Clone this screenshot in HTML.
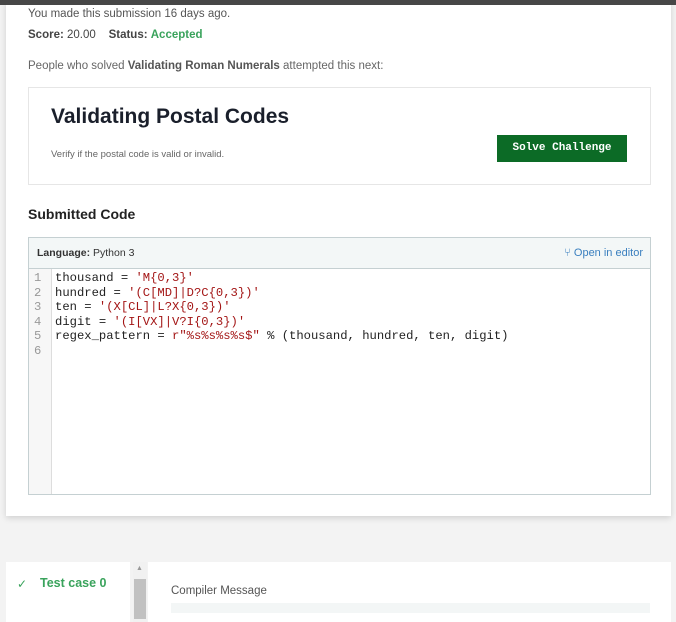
<!DOCTYPE html>
<html><head><style>
body{margin:0;width:676px;height:611px;background:#f3f3f3;font-family:"Liberation Sans",sans-serif;position:relative;overflow:hidden;}
.top{position:absolute;left:0;top:0;width:676px;height:5px;background:#474747;z-index:5;}
.card{position:absolute;left:6px;top:0;width:665px;height:516px;background:#fff;box-shadow:0 2px 6px rgba(0,0,0,.15);}
.t{position:absolute;white-space:nowrap;}
.box{position:absolute;left:28px;top:87px;width:621px;height:96px;border:1px solid #e6e6e6;}
.btn{position:absolute;left:497px;top:135px;width:130px;height:27px;background:#0c6b26;color:#fff;font:bold 11px "Liberation Mono",monospace;text-align:center;line-height:27px;}
.code{position:absolute;left:28px;top:237px;width:621px;height:256px;border:1px solid #c5d0d2;overflow:hidden;}
.hdr{height:30px;background:#f3f7f7;border-bottom:1px solid #c5d0d2;}
.gut{position:absolute;left:0;top:31px;width:22px;height:225px;background:#f7f7f7;border-right:1px solid #ddd;}
pre{margin:0;font:12.2px/14.5px "Liberation Mono",monospace;position:absolute;white-space:pre;}
.s{color:#a31515;}
</style></head><body>
<div class="top"></div>
<div class="card">
<div class="t" style="left:22px;top:8px;font-size:11.5px;color:#555">You made this submission 16 days ago.</div>
<div class="t" style="left:22px;top:29px;font-size:11.5px;color:#444"><b>Score:</b> 20.00 &nbsp;&nbsp;&nbsp;<b>Status:</b> <b style="color:#3aa35c">Accepted</b></div>
<div class="t" style="left:22px;top:60px;font-size:11.5px;color:#666">People who solved <b style="color:#555">Validating Roman Numerals</b> attempted this next:</div>
</div>
<div class="box"></div>
<div class="t" style="left:51px;top:105px;font-size:21px;font-weight:bold;color:#1a1f2b">Validating Postal Codes</div>
<div class="t" style="left:51px;top:149px;font-size:9.5px;color:#666">Verify if the postal code is valid or invalid.</div>
<div class="btn">Solve Challenge</div>
<div class="t" style="left:28px;top:206px;font-size:14px;font-weight:bold;color:#222">Submitted Code</div>
<div class="code">
<div class="hdr"><span class="t" style="left:8px;top:9px;font-size:10.5px;color:#333"><b>Language:</b> Python 3</span><span class="t" style="right:7px;top:9px;font-size:11px;color:#3a7fbf">⑂ Open in editor</span></div>
<div class="gut"></div>
<pre style="left:5px;top:33px;color:#999;text-align:right">1
2
3
4
5
6</pre>
<pre style="left:26px;top:33px;color:#222">thousand = <span class="s">'M{0,3}'</span>
hundred = <span class="s">'(C[MD]|D?C{0,3})'</span>
ten = <span class="s">'(X[CL]|L?X{0,3})'</span>
digit = <span class="s">'(I[VX]|V?I{0,3})'</span>
regex_pattern = <span class="s">r"%s%s%s%s$"</span> % (thousand, hundred, ten, digit)
</pre>
</div>
<div style="position:absolute;left:6px;top:562px;width:124px;height:60px;background:#fff"></div>
<div style="position:absolute;left:133px;top:562px;width:14px;height:60px;background:#f1f1f1"></div>
<div style="position:absolute;left:134px;top:579px;width:12px;height:40px;background:#c1c1c1"></div>
<div class="t" style="left:136px;top:565px;font-size:7px;color:#999">▲</div>
<div style="position:absolute;left:148px;top:562px;width:523px;height:60px;background:#fff"></div>
<div class="t" style="left:17px;top:577px;font-size:12px;color:#3aa35c">✓</div>
<div class="t" style="left:40px;top:576px;font-size:12.5px;font-weight:bold;color:#3aa35c">Test case 0</div>
<div class="t" style="left:171px;top:585px;font-size:11.5px;color:#555">Compiler Message</div>
<div style="position:absolute;left:171px;top:603px;width:479px;height:10px;background:#f3f6f6"></div>
</body></html>
